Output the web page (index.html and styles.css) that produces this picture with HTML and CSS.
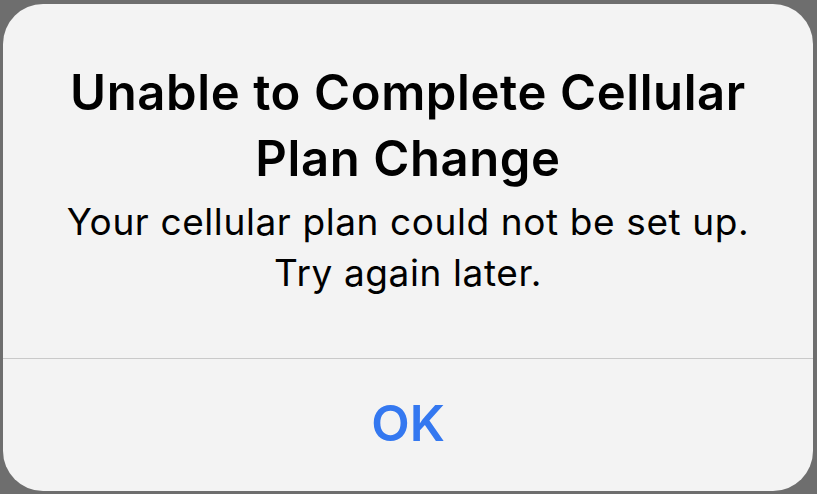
FILE: index.html
```html
<!DOCTYPE html>
<html lang="en">
<head>
    <meta charset="UTF-8">
    <meta name="viewport" content="width=device-width, initial-scale=1.0">
    <title>Alert</title>
    <link rel="stylesheet" href="styles.css">
</head>
<body>
    <div class="alert">
        <div class="alert-body">
            <h1 class="alert-title">Unable to Complete Cellular<br>Plan Change</h1>
            <p class="alert-message">Your cellular plan could not be set up.<br>Try again later.</p>
        </div>
        <div class="alert-actions">
            <button class="alert-btn">OK</button>
        </div>
    </div>
</body>
</html>
```

FILE: styles.css
```css
/* Base Reset */
* {
    margin: 0;
    padding: 0;
    box-sizing: border-box;
}

body {
    font-family: 'Inter', 'Liberation Sans', sans-serif;
    background: #6e6e6e;
    width: 817px;
    height: 494px;
    padding: 4px 4px 3px 3px;
    overflow: hidden;
}

/* Alert Card */
.alert {
    background: #f3f3f3;
    border-radius: 40px;
    height: 100%;
    display: flex;
    flex-direction: column;
    overflow: hidden;
}

.alert-body {
    height: 354px;
    padding: 56px 20px 0;
    text-align: center;
    color: #000;
}

.alert-title {
    font-size: 49px;
    font-weight: 600;
    line-height: 66px;
    letter-spacing: 0.6px;
}

.alert-message {
    margin-top: 4px;
    font-size: 37px;
    font-weight: 400;
    line-height: 51px;
    letter-spacing: 0.6px;
}

/* Button Row */
.alert-actions {
    flex: 1;
    border-top: 1px solid #c9c9c9;
    display: flex;
}

.alert-btn {
    flex: 1;
    border: none;
    background: transparent;
    font-family: inherit;
    font-size: 50px;
    font-weight: 600;
    color: #3478f0;
    padding-bottom: 4px;
}
```
